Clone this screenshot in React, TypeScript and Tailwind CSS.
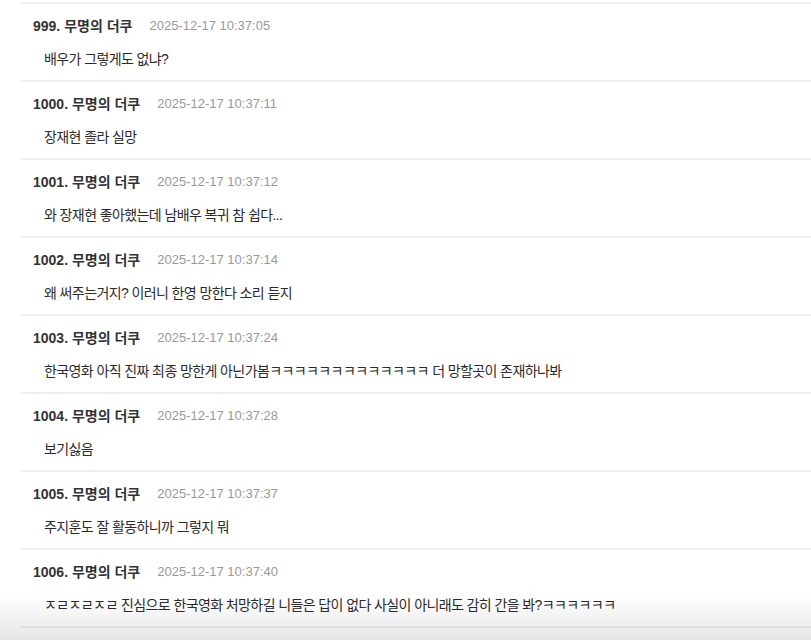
import React from 'react';

interface Comment {
  no: number;
  date: string;
  text: string;
}

const comments: Comment[] = [
  { no: 999, date: '2025-12-17 10:37:05', text: '배우가 그렇게도 없냐?' },
  { no: 1000, date: '2025-12-17 10:37:11', text: '장재현 졸라 실망' },
  { no: 1001, date: '2025-12-17 10:37:12', text: '와 장재현 좋아했는데 남배우 복귀 참 쉽다...' },
  { no: 1002, date: '2025-12-17 10:37:14', text: '왜 써주는거지? 이러니 한영 망한다 소리 듣지' },
  {
    no: 1003,
    date: '2025-12-17 10:37:24',
    text: '한국영화 아직 진짜 최종 망한게 아닌가봄ㅋㅋㅋㅋㅋㅋㅋㅋㅋㅋㅋㅋㅋ 더 망할곳이 존재하나봐',
  },
  { no: 1004, date: '2025-12-17 10:37:28', text: '보기싫음' },
  { no: 1005, date: '2025-12-17 10:37:37', text: '주지훈도 잘 활동하니까 그렇지 뭐' },
  {
    no: 1006,
    date: '2025-12-17 10:37:40',
    text: 'ㅈㄹㅈㄹㅈㄹ 진심으로 한국영화 처망하길 니들은 답이 없다 사실이 아니래도 감히 간을 봐?ㅋㅋㅋㅋㅋㅋ',
  },
];

const CommentRow: React.FC<{ c: Comment }> = ({ c }) => (
  <li className="border-b-2 border-[#f0f0f0] pt-[12px] pb-[11px]">
    <div className="flex items-center h-[20px] pl-[12px]">
      <span className="text-[14px] font-bold text-[#333]">
        {c.no}. 무명의 더쿠
      </span>
      <span className="ml-[17px] text-[13px] text-[#999]">{c.date}</span>
    </div>
    {/* comment body */}
    <p className="mt-[13px] h-[20px] leading-[20px] pl-[23px] text-[14px] text-[#2b2b2b] tracking-[-0.6px]">
      {c.text}
    </p>
  </li>
);

export default function App() {
  return (
    <div
      className="relative w-[811px] h-[640px] overflow-hidden bg-white"
      style={{ fontFamily: '"Liberation Sans", "Noto Sans CJK KR", sans-serif' }}
    >
      <ul className="ml-[21px]">
        <li className="h-[4px] border-b-2 border-[#f0f0f0]" />
        {comments.map((c) => (
          <CommentRow key={c.no} c={c} />
        ))}
      </ul>
      {/* bottom fade from the screenshot */}
      <div className="absolute left-0 right-0 bottom-0 h-[44px] bg-linear-to-b from-white/0 to-black/10 pointer-events-none" />
    </div>
  );
}
